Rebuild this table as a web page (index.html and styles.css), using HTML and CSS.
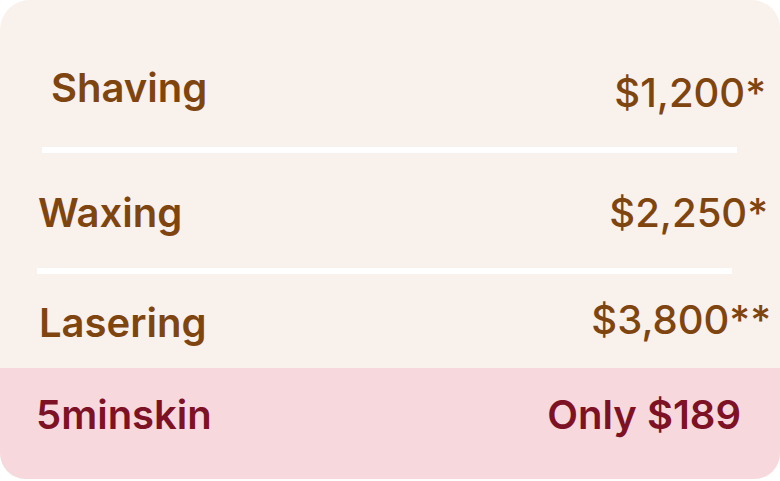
FILE: index.html
```html
<!DOCTYPE html>
<html lang="en">
<head>
<meta charset="utf-8">
<title>Hair removal cost comparison</title>
<link rel="stylesheet" href="styles.css">
</head>
<body>
  <div class="card">
    <div class="row row-shaving">
      <span class="label">Shaving</span>
      <span class="price">$1,200*</span>
    </div>
    <div class="divider divider-1"></div>
    <div class="row row-waxing">
      <span class="label">Waxing</span>
      <span class="price">$2,250*</span>
    </div>
    <div class="divider divider-2"></div>
    <div class="row row-lasering">
      <span class="label">Lasering</span>
      <span class="price">$3,800**</span>
    </div>
    <div class="row row-brand">
      <span class="label">5minskin</span>
      <span class="price">Only $189</span>
    </div>
  </div>
</body>
</html>
```

FILE: styles.css
```css
* { box-sizing: border-box; }

html, body {
  margin: 0;
  padding: 0;
  background: #ffffff;
}

body {
  font-family: Inter, "Noto Sans", sans-serif;
}

.card {
  width: 780px;
  height: 479px;
  background: #f9f1ec;
  border-radius: 30px 28px 26px 26px;
  overflow: hidden;
  display: flex;
  flex-direction: column;
}

.row {
  display: flex;
  justify-content: space-between;
  align-items: flex-start;
  color: #7e4511;
  line-height: 40px;
  font-size: 40px;
}

.label {
  font-weight: 600;
}

.price {
  font-weight: 500;
}

.row-shaving {
  height: 147px;
  padding: 68px 14px 0 51px;
}

.row-shaving .price {
  margin-top: 5px;
}

.row-waxing {
  height: 115px;
  padding: 40px 12px 0 38px;
}

.row-lasering {
  height: 94px;
  padding: 26px 9px 0 39px;
}

.row-lasering .label {
  margin-top: 3px;
}

.row-brand {
  height: 111px;
  padding: 27px 39px 0 36px;
  background: #f6d8dd;
  color: #7d1125;
}

.row-brand .price {
  font-weight: 600;
}

.divider {
  height: 6px;
  width: 695px;
  background: #ffffff;
  flex: none;
}

.divider-1 { margin-left: 42px; }
.divider-2 { margin-left: 37px; }
```
